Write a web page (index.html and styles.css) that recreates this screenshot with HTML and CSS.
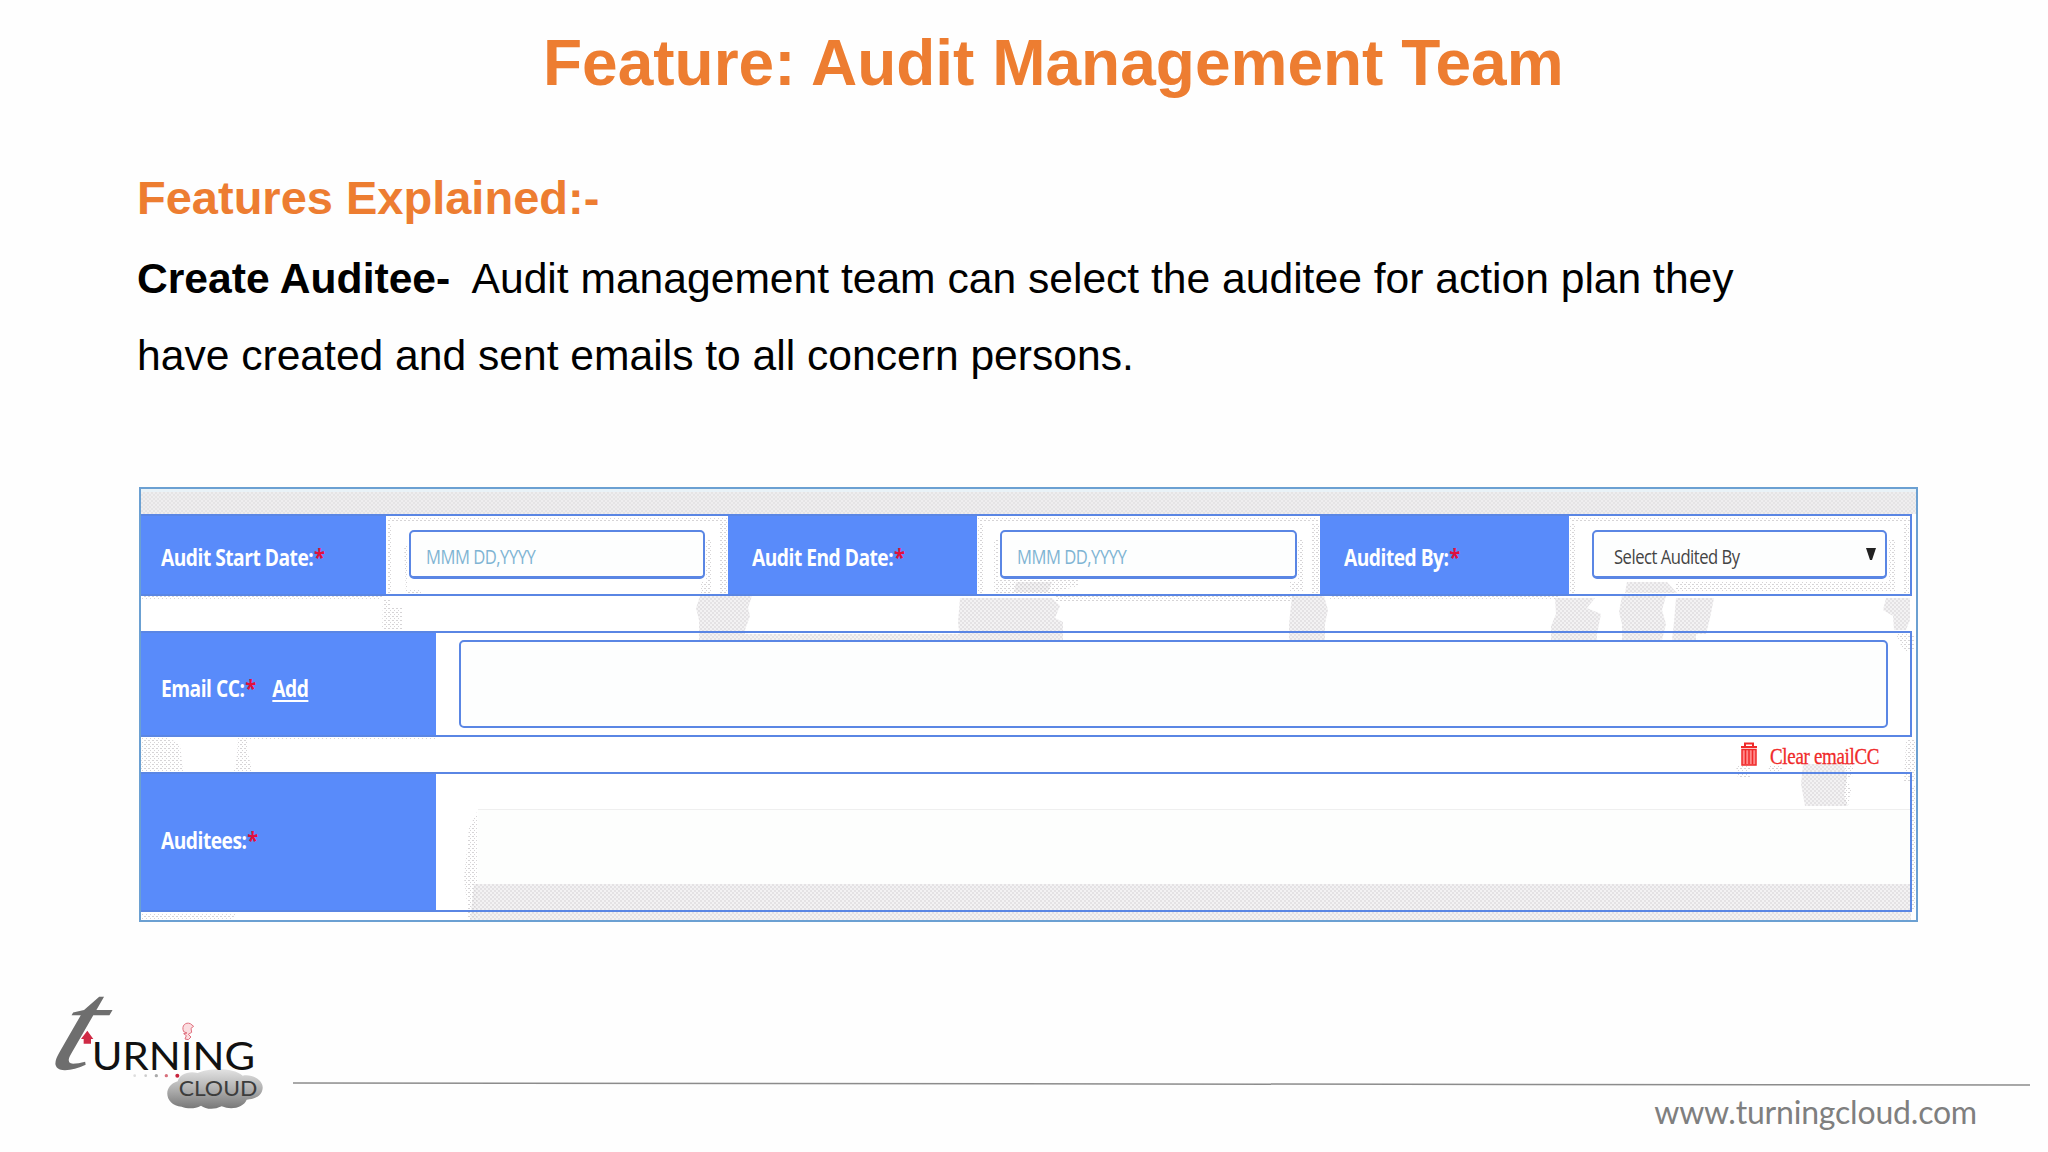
FILE: index.html
```html
<!DOCTYPE html>
<html lang="en">
<head>
  <meta charset="utf-8">
  <title>Feature: Audit Management Team</title>
  <link rel="stylesheet" href="styles.css">
</head>
<body>

<div class="slide">
  <h1>Feature: Audit Management Team</h1>

  <div class="intro">
    <h2>Features Explained:-</h2>
    <p><b>Create Auditee-</b>&nbsp; Audit management team can select the auditee for action plan they<br>have created and sent emails to all concern persons.</p>
  </div>

  <div class="panel">
    <!-- dotted shading behind the form -->
    <svg class="shade" viewBox="139 487 1779 435">
      <defs>
        <pattern id="dots" width="4" height="4" patternUnits="userSpaceOnUse">
          <rect width="4" height="4" fill="#f3f2f3"/>
          <rect width="2" height="2" fill="#e4e2e4"/>
          <rect x="2" y="2" width="2" height="2" fill="#e4e2e4"/>
        </pattern>
        <pattern id="light" width="4" height="4" patternUnits="userSpaceOnUse">
          <rect width="2" height="1" fill="#d6d4d6"/>
          <rect x="2" y="2" width="1" height="1" fill="#d6d4d6"/>
        </pattern>
      </defs>
      <g fill="url(#dots)">
        <path d="M700 596h52l-4 12 2 8-5 14v10h-46v-20l-3-12z"/>
        <path d="M960 598h92l8 8-5 12 8 4v18H960l-2-18z"/>
        <path d="M745 634h215v6H745z"/>
        <path d="M1292 596h32l4 14-3 14v16h-36v-16z"/>
        <path d="M1555 598h40l-8 10 14 6-4 20v6h-46v-14l5-12z"/>
        <path d="M1622 596h44l-4 14 4 14-4 16h-40v-16l-3-12z"/>
        <path d="M1676 598h38l-4 20-4 16h-10v6h-24l2-18z"/>
        <path d="M1627 582h40l10 11h-52z"/>
        <path d="M1886 598h24v22l-4 10h-12l-1-14-10-6z"/>
        <path d="M1803 764h40l4 12-3 20 4 10h-43l-4-22z"/>
        <path d="M474 884h1437v36H470z"/>
        <path d="M1016 582h36l-4 10h-34z"/>
      </g>
      <g fill="url(#light)">
        <path d="M387 517h340v4H387zM978 517h340v4H978zM1570 517h340v4h-340z"/>
        <path d="M387 523h5v70h-5zM720 517h8v78h-8zM978 523h5v70h-5zM1312 523h7v70h-7zM1570 523h5v70h-5zM1903 523h6v70h-6z"/>
        <path d="M404 545h4v45h13v5h-15zM706 540h5v55h-10v-14h5zM994 540h4v40h80v6l-30 8h-54zM1298 540h6v52h-14v-10h8zM1889 540h6v52h-220v-10h214z"/>
        <path d="M142 596h240v4H142zM1055 596h240v5h-240zM1330 596h230v4h-230z"/>
        <path d="M383 600h7v8h12v22h-20z"/>
        <path d="M142 738h26l12 6 3 27h-42zM238 738h10v14l4 19H234l3-16z"/>
        <path d="M250 738h185v2H250z"/>
        <path d="M477 812v108h-9v-8l-4-34 5-50z"/>
        <path d="M1736 766h14v12h-12zM1768 766h14v6h-12zM1906 740h9v42h-11zM1912 785h4v125h-4zM1896 634h18v18h-10z"/>
        <path d="M1845 764h8v12l-6 2 4 12-3 16h-6z"/>
        <path d="M142 914h94l-4 5H142z"/>
      </g>
    </svg>

    <div class="strip"></div>

    <div class="row dates">
      <div class="label"><span class="cond">Audit Start Date:<i>*</i></span></div>
      <div class="field"><div class="input"><span class="cond hint">MMM DD,YYYY</span></div></div>
      <div class="label"><span class="cond">Audit End Date:<i>*</i></span></div>
      <div class="field"><div class="input"><span class="cond hint">MMM DD,YYYY</span></div></div>
      <div class="label"><span class="cond">Audited By:<i>*</i></span></div>
      <div class="field">
        <div class="input select">
          <span class="cond">Select Audited By</span>
          <svg width="10" height="12" viewBox="0 0 10 12"><path d="M0 0h10L6 12H4z" fill="#222"/></svg>
        </div>
      </div>
    </div>

    <div class="row email">
      <div class="label"><span class="cond">Email CC:<i>*</i><u>Add</u></span></div>
      <div class="field"><div class="input"></div></div>
    </div>

    <div class="clear">
      <svg width="18" height="24" viewBox="0 0 18 24" fill="none" stroke="#f02a2a">
        <path d="M1 5h16M5 4.500V1.500h8v3" stroke-width="2"/>
        <path d="M2 7.500h14v15.500H2z" fill="#ff8a8a" stroke-width="1.500"/>
        <path d="M5.500 8v14M9 8v14M12.500 8v14" stroke-width="1.500"/>
      </svg>
      <span>Clear emailCC</span>
    </div>

    <div class="row auditees">
      <div class="label"><span class="cond">Auditees:<i>*</i></span></div>
      <div class="field"><div class="list"></div></div>
    </div>
  </div>

  <div class="footer">
    <svg class="logo" viewBox="0 0 840 420">
      <defs>
        <linearGradient id="cloud" x1="0" y1="0" x2="0" y2="1">
          <stop offset="0" stop-color="#e2e2e2"/>
          <stop offset=".5" stop-color="#b0b0b0"/>
          <stop offset="1" stop-color="#777"/>
        </linearGradient>
      </defs>
      <path d="M425 380c-50-2-60-62-12-76 6-20 30-32 60-25 30-14 105-18 135 8 30-6 62 14 60 38-2 22-20 32-48 34-10 24-45 32-75 20-25 12-48 8-62-2-18 10-40 10-58 3z" fill="url(#cloud)"/>
      <text class="tee" transform="translate(16 268) skewX(-20) scale(1.2 1)">t</text>
      <path d="M142 152l18 25h-7v14h-22v-14h-8z" fill="#cf2a45"/>
      <text class="word" x="155" y="271" textLength="490" lengthAdjust="spacingAndGlyphs">URNING</text>
      <text class="sub" x="416" y="347" textLength="236" lengthAdjust="spacingAndGlyphs">CLOUD</text>
      <path d="M431 155c-8-18 6-30 20-24l10 8-8 6 2 12-10 6 8 8-8 8-10-2 4-10-8-6 10-2z" fill="#fbdde0" stroke="#e0707e" stroke-width="3"/>
      <circle cx="284" cy="287" r="4" fill="#ddd"/>
      <circle cx="317" cy="287" r="4" fill="#ccc"/>
      <circle cx="349" cy="287" r="5" fill="#aaa"/>
      <circle cx="379" cy="287" r="5" fill="#d8707c"/>
      <circle cx="412" cy="287" r="6" fill="#c8243c"/>
    </svg>
    <div class="site">
      <svg width="1737" height="4" viewBox="0 0 1737 4"><path d="M0 1L1737 3" stroke="#8c8c8c" stroke-width="1.500"/></svg>
      <span>www.turningcloud.com</span>
    </div>
  </div>
</div>

</body>
</html>
```
FILE: styles.css
```css
* {
  box-sizing: border-box;
  margin: 0;
  padding: 0;
}

body {
  background-color: #fefefe;
  font-family: "Liberation Sans", Arial, sans-serif;
}

.slide {
  width: 2048px;
  height: 1152px;
  overflow: hidden;
}

h1 {
  height: 126px;
  padding: 26px 0 0 543px;
  font-size: 64px;
  line-height: 74px;
  color: #ed7d31;
  white-space: nowrap;
}

.intro {
  height: 361px;
  padding: 36px 0 0 137px;
}

h2 {
  font-size: 47px;
  line-height: 72px;
  color: #ed7d31;
}

p {
  margin-top: 6px;
  font-size: 42.600px;
  line-height: 77px;
  color: #000;
  white-space: nowrap;
}

/* form */
.panel {
  position: relative;
  width: 1779px;
  height: 435px;
  margin-left: 139px;
  border: 2px solid #6ba0d2;
  background-color: #fff;
}

.shade {
  position: absolute;
  left: -2px;
  top: -2px;
  width: 1779px;
  height: 435px;
}

.strip {
  position: relative;
  height: 25px;
  border-top: 3px solid #e9f2f7;
  background: repeating-conic-gradient(#e5e4e5 0 25%, #efeeef 0 50%) 0 0 / 4px 4px;
}

.row {
  position: relative;
  display: flex;
  width: 1771px;
  border: 2px solid #5a86e4;
  border-left: none;
}

.label {
  display: flex;
  align-items: center;
  padding: 3px 0 0 20px;
  background-color: #598bfa;
  color: #fff;
  font-weight: bold;
}

.cond {
  font-family: "Open Sans", "Noto Sans", sans-serif;
  font-size: 23px;
  line-height: 30px;
  letter-spacing: -0.6px;
  white-space: nowrap;
  transform: scaleX(.81);
  transform-origin: left;
}

.label .cond {
  transform: scaleX(.835);
}

.cond i {
  margin-left: 1px;
  font-size: 24px;
  line-height: 20px;
  font-style: normal;
  color: #e0103c;
}

.cond u {
  margin-left: 20px;
  text-underline-offset: 3px;
}

.input {
  display: flex;
  align-items: center;
  border: 2px solid #5a86e4;
  border-bottom-width: 3px;
  border-radius: 5px;
  background-color: #fdfefe;
}

.dates {
  display: grid;
  grid-template-columns: 245px 342px 249px 343px 249px 1fr;
  height: 82px;
}

.dates .label + .field + .label {
  padding-left: 24px;
}

.dates .field {
  padding: 14px 23px 14px;
}

.dates .input {
  height: 49px;
  padding: 3px 0 0 15px;
}

.dates .input .cond {
  font-size: 20.500px;
}

.dates .hint {
  color: #7fb4d3;
}

.dates .select {
  justify-content: space-between;
  padding: 3px 9px 0 20px;
  color: #444;
}

.select svg {
  margin-top: -4px;
}

.email {
  height: 106px;
  margin-top: 35px;
}

.email .label,
.auditees .label {
  width: 295px;
}

.email .label {
  padding-top: 8px;
}

.email .field {
  flex: 1;
  padding: 7px 22px 7px 23px;
}

.email .input {
  height: 88px;
  border-bottom-width: 2px;
}

.clear {
  position: relative;
  display: flex;
  height: 35px;
  padding: 5px 0 0 1599px;
  gap: 12px;
}

.clear span {
  padding-top: 1px;
  font-family: "Liberation Serif", serif;
  font-size: 24px;
  line-height: 26px;
  letter-spacing: -0.4px;
  color: #f02a2a;
  -webkit-text-stroke: 0.3px #f02a2a;
  white-space: nowrap;
  transform: scaleX(.79);
  transform-origin: left;
}

.auditees {
  height: 140px;
}

.auditees .label {
  padding: 0 0 4px 20px;
}

.auditees .field {
  flex: 1;
  padding: 35px 0 0 42px;
}

.list {
  height: 75px;
  border-top: 1px solid #efefef;
  background-color: #fdfefd;
}

/* footer */
.footer {
  display: flex;
  height: 172px;
  margin-top: 58px;
  padding-left: 40px;
}

.logo {
  width: 280px;
  height: 140px;
  flex: none;
  overflow: visible;
}

.tee {
  font: italic 385px "Liberation Serif", serif;
  fill: #6e6e6e;
}

.word {
  font: 118px Lato, sans-serif;
  fill: #111;
}

.sub {
  font: 66px Lato, sans-serif;
  fill: #3c3c3c;
}

.site {
  display: flex;
  flex-direction: column;
  width: 1737px;
  margin-left: -27px;
  padding-top: 102px;
}

.site span {
  margin-top: 6px;
  padding-right: 53px;
  font-family: Lato, sans-serif;
  font-size: 32px;
  line-height: 40px;
  letter-spacing: -0.2px;
  text-align: right;
  color: #7f7f7f;
}
```
